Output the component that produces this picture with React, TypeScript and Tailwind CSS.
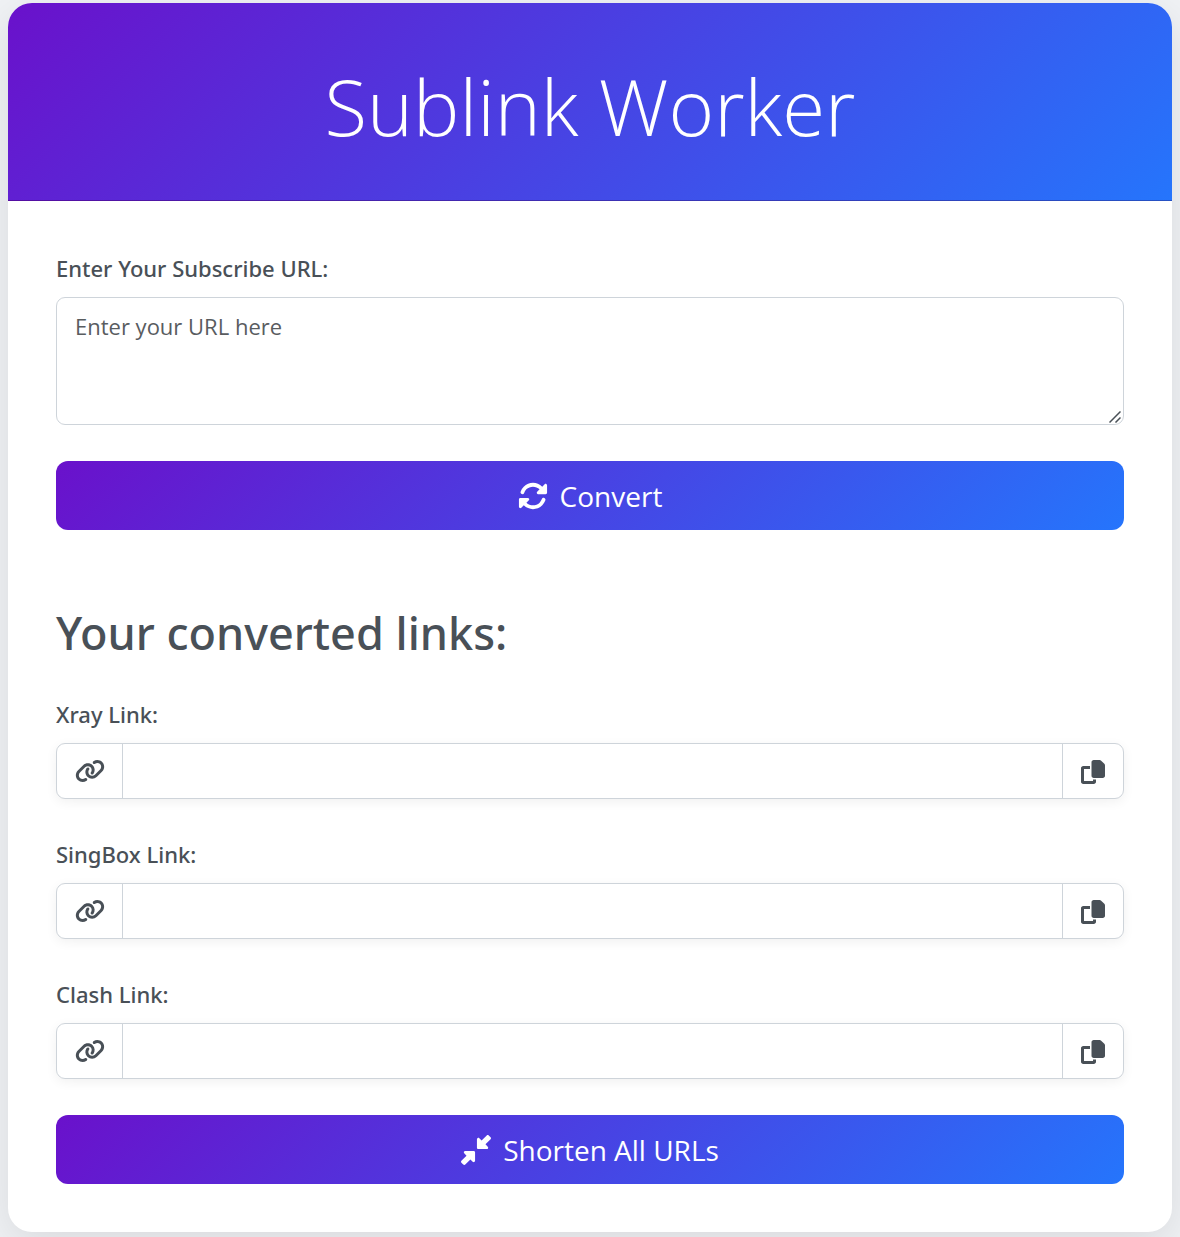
import { useState } from "react";
import { FaDownLeftAndUpRightToCenter, FaLink, FaRotate } from "react-icons/fa6";

const links = [
  { id: "xray", label: "Xray Link:" },
  { id: "singbox", label: "SingBox Link:" },
  { id: "clash", label: "Clash Link:" },
];

const labelClass = "mb-[11px] block pt-px font-['Noto_Sans',sans-serif] text-[22px] leading-9 font-medium";

const buttonClass =
  "flex h-[69px] w-full items-center justify-center gap-3 rounded-xl bg-[linear-gradient(135deg,#6a11cb,#2575fc)] pt-px text-[28px] leading-[45px] text-white";

function CopyIcon() {
  return (
    <svg viewBox="0 0 512 512" fill="currentColor" className="size-6" aria-hidden="true">
      <path d="M272 0H396.1c12.7 0 24.9 5.1 33.9 14.1l67.9 67.9c9 9 14.1 21.2 14.1 33.9V336c0 26.5-21.5 48-48 48H272c-26.5 0-48-21.5-48-48V48c0-26.5 21.5-48 48-48zM48 128H192v64H64V448H256V416h64v48c0 26.5-21.5 48-48 48H48c-26.5 0-48-21.5-48-48V176c0-26.5 21.5-48 48-48z" />
    </svg>
  );
}

function LinkField({ id, label }: { id: string; label: string }) {
  return (
    <div>
      <label htmlFor={id} className={labelClass}>
        {label}
      </label>
      <div className="flex h-14 rounded-[9px] border border-[#ced4da] bg-white shadow-[0_3px_12px_rgba(0,0,0,0.06)]">
        <span className="flex w-[66px] items-center justify-center border-r border-[#ced4da]">
          <FaLink className="size-[30px]" />
        </span>
        <input id={id} type="text" readOnly className="min-w-0 flex-1 px-4 text-[22px] outline-none" />
        <button
          type="button"
          aria-label={"Copy " + label}
          className="flex w-[61px] items-center justify-center border-l border-[#ced4da] pt-px"
        >
          <CopyIcon />
        </button>
      </div>
    </div>
  );
}

export default function App() {
  const [url, setUrl] = useState("");
  return (
    <div className="min-h-screen bg-[#f0f2f5] px-2 pt-[3px] pb-[5px] font-['Open_Sans',sans-serif] text-[#495057]">
      <main className="overflow-hidden rounded-[24px] bg-white shadow-[0_12px_45px_rgba(0,0,0,0.1)]">
        <header className="border-b border-black/20 bg-[linear-gradient(135deg,#6a11cb,#2575fc)] px-6 pt-[52px] pb-[43px]">
          <h1 className="text-center text-[78px] leading-[102px] font-light text-white">Sublink Worker</h1>
        </header>
        <div className="p-12">
          <form onSubmit={(e) => e.preventDefault()}>
            <label htmlFor="url" className={labelClass}>
              Enter Your Subscribe URL:
            </label>
            <div className="relative mb-9">
              <textarea
                id="url"
                value={url}
                onChange={(e) => setUrl(e.target.value)}
                placeholder="Enter your URL here"
                className="block h-32 w-full resize-y rounded-[9px] border border-[#ced4da] px-[18px] py-[10px] text-[22px] leading-9 outline-none placeholder:text-[#595c5f] [&::-webkit-resizer]:bg-transparent"
              />
              <svg
                viewBox="0 0 12 12"
                className="pointer-events-none absolute right-[3px] bottom-0.5 size-3"
                stroke="#495057"
                strokeWidth="1.5"
                aria-hidden="true"
              >
                <path d="M0.5 11.5L11.5 0.5M6.5 11.5L11.5 6.5" />
              </svg>
            </div>
            <button type="submit" className={buttonClass}>
              <FaRotate className="size-[30px]" />
              Convert
            </button>
          </form>
          <section className="mt-[72px]">
            <h2 className="mb-[34px] pt-0.5 font-['Noto_Sans',sans-serif] text-[45px] leading-[57px] font-medium">
              Your converted links:
            </h2>
            <div className="mb-9 flex flex-col gap-9">
              {links.map((link) => (
                <LinkField key={link.id} id={link.id} label={link.label} />
              ))}
            </div>
            <button type="button" className={buttonClass}>
              <FaDownLeftAndUpRightToCenter className="size-[30px]" />
              Shorten All URLs
            </button>
          </section>
        </div>
      </main>
    </div>
  );
}
